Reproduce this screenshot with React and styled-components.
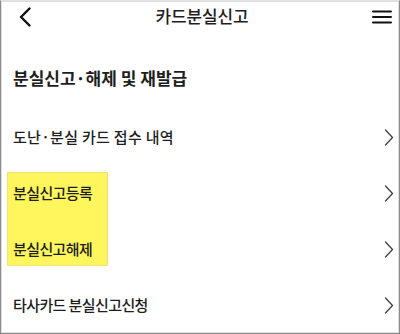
import React from 'react';
import styled, { createGlobalStyle } from 'styled-components';

const GlobalStyle = createGlobalStyle`
  html, body {
    margin: 0;
    padding: 0;
    background: #ffffff;
  }
  body {
    font-family: "Noto Sans CJK KR", "Noto Sans", sans-serif;
    color: #1e1e1e;
  }
`;

const Frame = styled.div`
  box-sizing: border-box;
  width: 400px;
  height: 334px;
  overflow: hidden;
  border: 1px solid #8c8c8c;
  border-top-color: #e2e2e2;
  box-shadow: inset 1px 1px 0 #dedede, inset -1px -1px 0 #dedede;
  display: flex;
  flex-direction: column;
`;

const Header = styled.header`
  height: 35px;
  display: flex;
  align-items: center;
  justify-content: space-between;
  padding: 0 7px 0 17px;
`;

const IconButton = styled.button`
  border: 0;
  background: none;
  padding: 0;
  display: flex;
  align-items: center;
  justify-content: center;
  color: #111;
`;

const Title = styled.h1`
  margin: 0;
  font-size: 17px;
  font-weight: 500;
  letter-spacing: -0.1px;
  line-height: 24px;
  margin-top: -1px;
`;

const SectionTitle = styled.h2`
  margin: 0;
  padding: 34px 12px 19px;
  font-size: 17px;
  font-weight: 700;
  line-height: 24px;
  letter-spacing: 0;
`;

const List = styled.ul`
  list-style: none;
  margin: 0;
  padding: 0;
`;

const Group = styled.div`
  position: relative;
`;

const Highlight = styled.div`
  position: absolute;
  left: 6px;
  top: 7px;
  bottom: 11px;
  width: 101px;
  background: #fff55c;
  border: 1px solid #efe27a;
  box-sizing: border-box;
`;

const Row = styled.li`
  position: relative;
  height: 56px;
  display: flex;
  align-items: center;
  justify-content: space-between;
  padding: 0 5px 0 12px;
`;

const Label = styled.span`
  font-size: 15px;
  font-weight: 500;
  letter-spacing: ${p => p.$spacing};
  line-height: 20px;
`;

const BackIcon = () => (
  <svg width="14" height="20" viewBox="0 0 14 20">
    <path d="M11.5 1.5 L3 10 L11.5 18.5" fill="none" stroke="#111" strokeWidth="2.4" strokeLinecap="round" strokeLinejoin="round" />
  </svg>
);

const MenuIcon = () => (
  <svg width="20" height="16" viewBox="0 0 20 16">
    <path d="M1 2.5 H19 M1 8 H19 M1 13.5 H19" stroke="#111" strokeWidth="2" strokeLinecap="round" />
  </svg>
);

const Chevron = () => (
  <svg width="10" height="17" viewBox="0 0 10 17">
    <path d="M1.5 1 L8.5 8.5 L1.5 16" fill="none" stroke="#3a3a3a" strokeWidth="1.2" strokeLinecap="round" strokeLinejoin="round" />
  </svg>
);

const items = [
  { label: '도난·분실 카드 접수 내역', spacing: '0.3px' },
];

export default function App() {
  return (
    <>
      <GlobalStyle />
      <Frame>
        <Header>
          <IconButton aria-label="뒤로">
            <BackIcon />
          </IconButton>
          <Title>카드분실신고</Title>
          <IconButton aria-label="메뉴">
            <MenuIcon />
          </IconButton>
        </Header>
        <SectionTitle>분실신고·해제 및 재발급</SectionTitle>
        <List>
          {items.map(item => (
            <Row key={item.label}>
              <Label $spacing={item.spacing}>{item.label}</Label>
              <Chevron />
            </Row>
          ))}
          <Group>
            <Highlight />
            <Row>
              <Label $spacing="-0.6px">분실신고등록</Label>
              <Chevron />
            </Row>
            <Row>
              <Label $spacing="-0.6px">분실신고해제</Label>
              <Chevron />
            </Row>
          </Group>
          <Row>
            <Label $spacing="-0.6px">타사카드 분실신고신청</Label>
            <Chevron />
          </Row>
        </List>
      </Frame>
    </>
  );
}
